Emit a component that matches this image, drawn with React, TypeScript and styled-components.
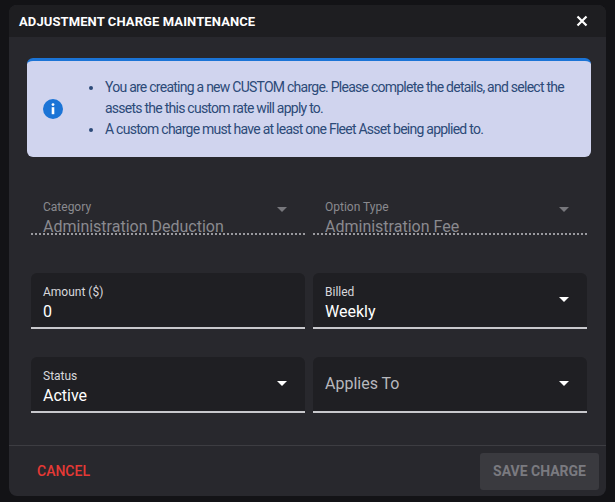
import React from "react";
import styled, { createGlobalStyle } from "styled-components";

const Global = createGlobalStyle`
  html, body { margin: 0; padding: 0; background: #131316; font-family: Roboto, "Liberation Sans", sans-serif; }
  #root { width: 615px; height: 502px; }
`;

const Page = styled.div`
  width: 615px; height: 502px; padding: 5px 9px 6px 9px; box-sizing: border-box;
`;
const Dialog = styled.div`
  height: 100%; background: #28282d; border-radius: 8px; overflow: hidden;
  display: flex; flex-direction: column;
`;
const Header = styled.div`
  height: 32px; background: #1e1e21; display: flex; align-items: center; justify-content: space-between;
  padding: 0 18px 0 10px; color: #fff; font-weight: 700; font-size: 13px; letter-spacing: 0.1px;
`;
const Body = styled.div`
  flex: 1; padding: 21px 15px 0 18px;
`;
const Alert = styled.div`
  background: #d0d4ee; border-top: 3px solid #1b74d6; border-radius: 6px;
  display: flex; align-items: center; padding: 16px 16px 17px 16px; gap: 25px; color: #2c4a78;
  font-size: 14px; line-height: 21px; letter-spacing: -0.75px;
  svg { flex-shrink: 0; }
`;
const List = styled.ul`
  margin: 0; padding-left: 16px;
  li { padding-left: 1px; }
`;
const Grid = styled.div`
  display: grid; grid-template-columns: 274px 274px; column-gap: 8px; row-gap: 28px; padding: 0 4px; margin-top: 30px;
`;
const Field = styled.div<{ $filled?: boolean; $disabled?: boolean }>`
  position: relative; height: ${p => (p.$disabled ? 48 : 56)}px; box-sizing: border-box;
  background: ${p => (p.$filled ? "#1f1f23" : "transparent")}; border-radius: 6px 6px 0 0;
  border-bottom: ${p => (p.$disabled ? "2px dotted #9a9a9f" : "2px solid #c8c8cc")};
  padding: ${p => (p.$disabled ? "12px 12px 0" : "11px 12px 0")};
  display: flex; flex-direction: column; justify-content: flex-start;
  ${p => p.$disabled && "margin-bottom: 10px;"}
`;
const Label = styled.div<{ $dim?: boolean }>`
  font-size: 12px; line-height: 16px; color: ${p => (p.$dim ? "#8a8a8f" : "#d8d8dc")};
`;
const Value = styled.div<{ $dim?: boolean; $big?: boolean }>`
  font-size: 16px; line-height: 22px; color: ${p => (p.$dim ? "#8a8a8f" : "#fff")};
  margin-top: ${p => (p.$big ? "5px" : "1px")};
  ${p => p.$big && "color:#b8b8bd;"}
`;
const Arrow = styled.div<{ $dim?: boolean }>`
  position: absolute; right: 18px; top: 50%; margin-top: -3px; width: 0; height: 0;
  border-left: 5px solid transparent; border-right: 5px solid transparent;
  border-top: 5px solid ${p => (p.$dim ? "#77777c" : "#fff")};
`;
const Footer = styled.div`
  height: 50px; border-top: 1px solid #3d3d42; display: flex; align-items: center; justify-content: space-between;
  padding: 0 7px 0 28px;
`;
const Cancel = styled.div`
  color: #e53935; font-weight: 500; font-size: 14px;
`;
const Save = styled.div`
  background: #3a3a3f; color: #7a7a80; font-weight: 700; font-size: 14px; padding: 0 13px;
  height: 37px; display: flex; align-items: center; border-radius: 3px;
`;

export default function App() {
  return (
    <Page>
      <Global />
      <Dialog>
        <Header>
          <span>ADJUSTMENT CHARGE MAINTENANCE</span>
          <svg width="12" height="12" viewBox="0 0 12 12"><path d="M1.5 1.5L10.5 10.5M10.5 1.5L1.5 10.5" stroke="#fff" strokeWidth="2.2" /></svg>
        </Header>
        <Body>
          <Alert>
            <svg width="20" height="20" viewBox="0 0 20 20">
              <circle cx="10" cy="10" r="10" fill="#1b74d6" />
              <circle cx="10" cy="5.6" r="1.4" fill="#fff" />
              <rect x="8.7" y="8.2" width="2.6" height="7" fill="#fff" />
            </svg>
            <List>
              <li>You are creating a new CUSTOM charge. Please complete the details, and select the assets the this custom rate will apply to.</li>
              <li>A custom charge must have at least one Fleet Asset being applied to.</li>
            </List>
          </Alert>
          <Grid>
            <Field $disabled>
              <Label $dim>Category</Label>
              <Value $dim>Administration Deduction</Value>
              <Arrow $dim />
            </Field>
            <Field $disabled>
              <Label $dim>Option Type</Label>
              <Value $dim>Administration Fee</Value>
              <Arrow $dim />
            </Field>
            <Field $filled>
              <Label>Amount ($)</Label>
              <Value>0</Value>
            </Field>
            <Field $filled>
              <Label>Billed</Label>
              <Value>Weekly</Value>
              <Arrow />
            </Field>
            <Field $filled>
              <Label>Status</Label>
              <Value>Active</Value>
              <Arrow />
            </Field>
            <Field $filled>
              <Value $big>Applies To</Value>
              <Arrow />
            </Field>
          </Grid>
        </Body>
        <Footer>
          <Cancel>CANCEL</Cancel>
          <Save>SAVE CHARGE</Save>
        </Footer>
      </Dialog>
    </Page>
  );
}
